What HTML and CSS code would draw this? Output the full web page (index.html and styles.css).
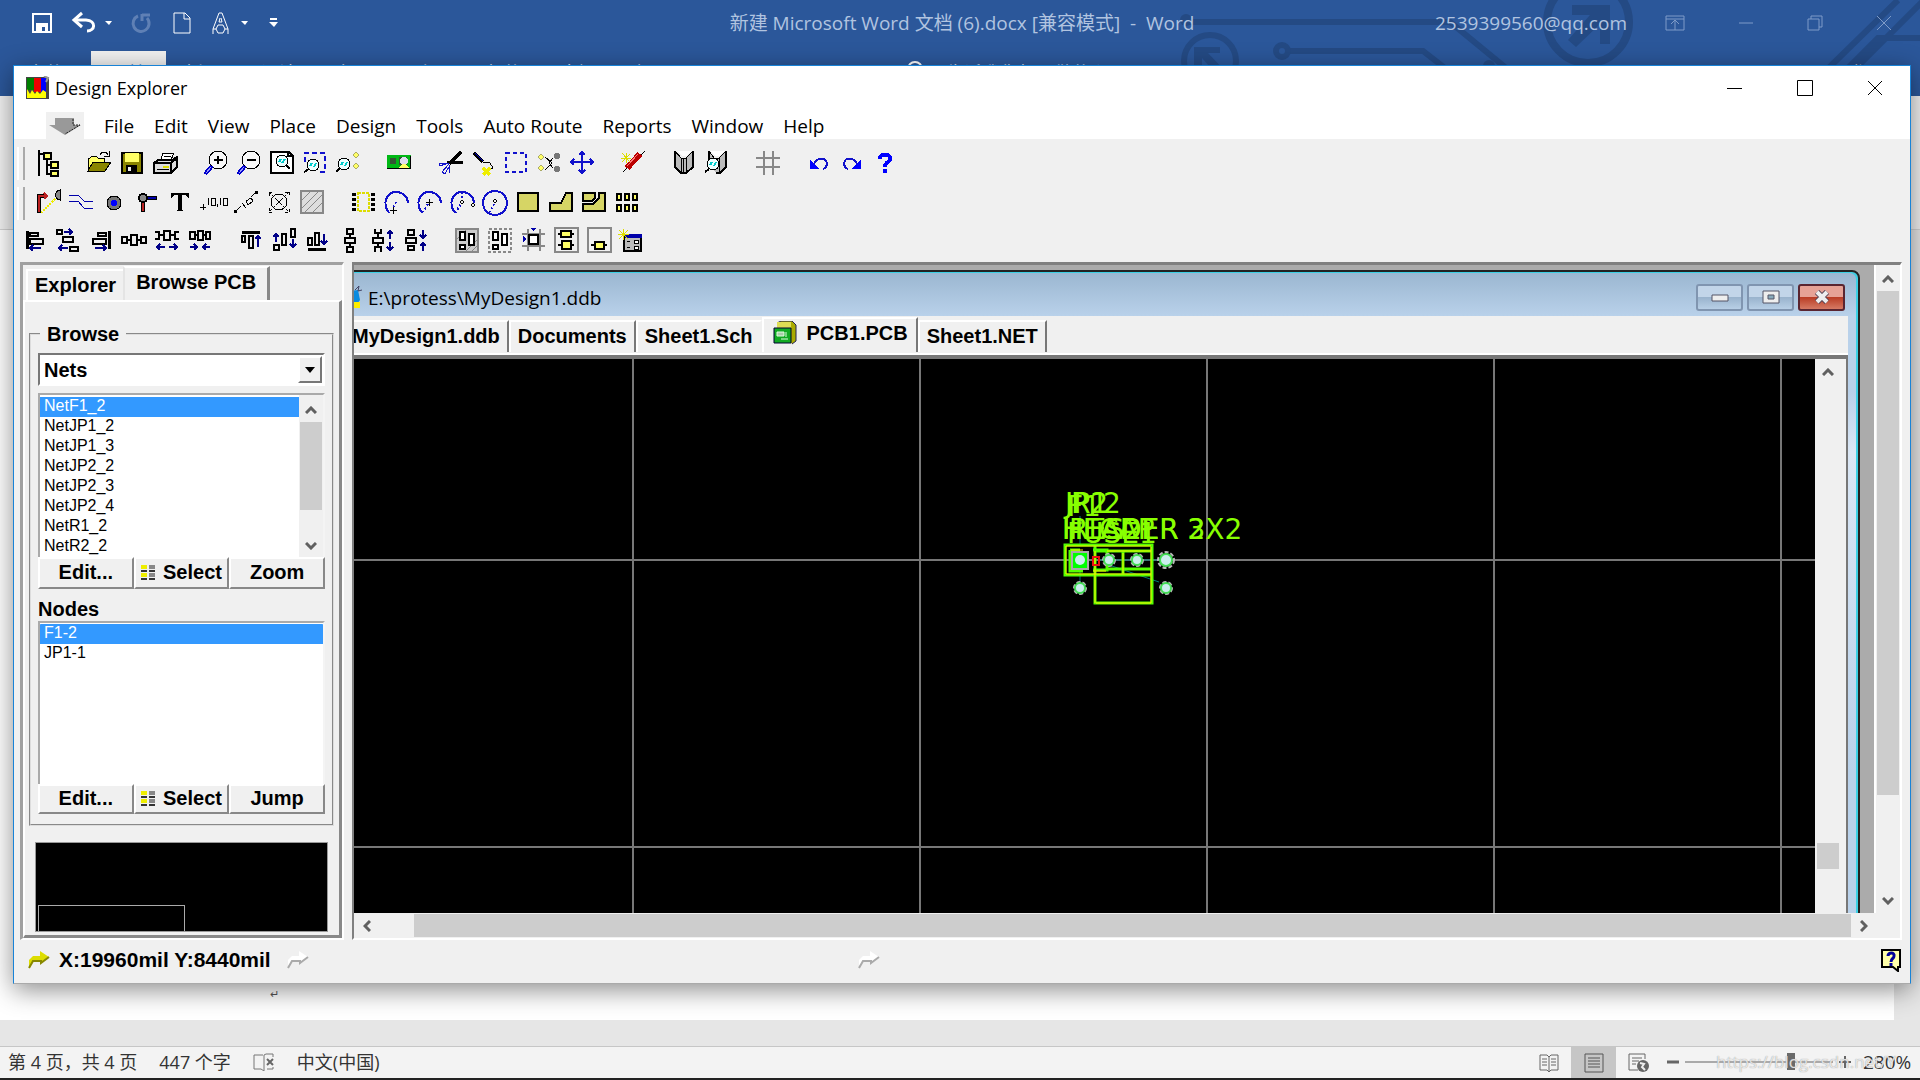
FILE: index.html
```html
<!DOCTYPE html>
<html lang="zh-CN">
<head>
<meta charset="utf-8">
<title>Design Explorer</title>
<link rel="stylesheet" href="styles.css">
</head>
<body>
<div class="desktop">
  <header class="word-head">
    <svg class="circuit" viewBox="0 0 760 96" width="760" height="96" aria-hidden="true">
      <g fill="none" stroke="#244a84" stroke-width="6">
        <path d="M26 22H290L380 96M126 51H263L290 72M660 96L718 38H880M640 96L738 0M668 96L764 0"/>
        <circle cx="50" cy="61" r="26"/><circle cx="122" cy="51" r="6"/><circle cx="428" cy="22" r="41" stroke-width="8"/>
      </g>
      <path d="M34 47H60V53H48L66 72L58 76L42 58V68H34ZM412 5H450V44H440V24L416 47L408 40L430 15H412Z" fill="#244a84"/>
      <circle cx="26" cy="20" r="6" fill="#244a84"/><circle cx="329" cy="66" r="6" fill="#244a84"/>
    </svg>
    <div class="word-title">
      <div class="quick">
        <button aria-label="保存"><svg width="20" height="20"><path d="M1 1H19V19H1ZM4 11H16" fill="none" stroke="#fff" stroke-width="2"/><path d="M4 12H16V19H13V14H10V19H4Z" fill="#fff"/></svg></button>
        <button aria-label="撤消"><svg width="36" height="20"><path d="M2 7H13C24 8 22 18 14 18" fill="none" stroke="#fff" stroke-width="3"/><path d="M9 0L1 7L9 14" fill="none" stroke="#fff" stroke-width="3"/><path d="M32 8H39L36 12Z" fill="#fff"/></svg></button>
        <button aria-label="重复"><svg width="22" height="20"><path d="M8 3A8 8 0 1 0 17 5M12 1V8M12 2H20" fill="none" stroke="#5f80b5" stroke-width="3"/></svg></button>
        <button aria-label="新建"><svg width="18" height="22"><path d="M1 1H12L17 6V21H1ZM11 1V7H17" fill="none" stroke="#fff"/></svg></button>
        <button aria-label="文本效果"><svg width="36" height="24"><path d="M1 23V18L7 2H10L16 18V23M8 7L7 11H10L9 7M6 14H11L13 18L11 22H6L4 18ZM1 18H4M13 18H16" fill="none" stroke="#fff"/><path d="M29 10H36L33 14Z" fill="#fff"/></svg></button>
        <button aria-label="自定义"><svg width="9" height="10"><path d="M1 1H8" stroke="#fff" stroke-width="2"/><path d="M0 4H9L5 9Z" fill="#fff"/></svg></button>
      </div>
      <div class="doc-name">新建 Microsoft Word 文档 (6).docx [兼容模式] &nbsp;- &nbsp;Word</div>
      <div class="account">
        <span>2539399560@qq.com</span>
        <button aria-label="功能区显示选项"><svg width="20" height="16"><path d="M1 1H19V15H1ZM1 4H19M10 15V6M6 9L10 5L14 9" fill="none" stroke="#7f9bc8"/></svg></button>
        <button aria-label="最小化"><svg width="16" height="16"><path d="M1 8H15" stroke="#7f9bc8"/></svg></button>
        <button aria-label="还原"><svg width="16" height="16"><path d="M1 4H12V15H1ZM4 4V1H15V12H12" fill="none" stroke="#7f9bc8"/></svg></button>
        <button aria-label="关闭"><svg width="16" height="16"><path d="M1 1L15 15M15 1L1 15" stroke="#7f9bc8"/></svg></button>
      </div>
    </div>
    <nav class="word-tabs">
      <button class="file">文件</button><button class="on">开始</button><button>插入</button><button>设计</button><button>布局</button><button>引用</button><button>邮件</button><button>审阅</button><button>视图</button>
      <svg class="bulb" width="20" height="30"><circle cx="10" cy="9" r="7" fill="none" stroke="#fff" stroke-width="2"/></svg>
      <button class="tell">告诉我您想要做什么</button>
      <button class="share">登录</button>
    </nav>
  </header>
  <main class="word-body">
    <div class="ribbon"></div>
    <div class="sheet"><span class="pilcrow">↵</span></div>
  </main>
  <footer class="word-foot">
    <span>第 4 页，共 4 页</span><span>447 个字</span>
    <svg width="22" height="18"><path d="M10 2H1V16H8L11 18V2L13 1H20V4M20 14V16H14" fill="none" stroke="#777"/><path d="M14 6L20 12M20 6L14 12" stroke="#666" stroke-width="2"/></svg>
    <span>中文(中国)</span>
    <div class="views">
      <button aria-label="阅读视图"><svg width="20" height="20"><path d="M1 2H8L10 4L12 2H19V17H12L10 19L8 17H1ZM10 4V18M3 6H8M3 9H8M3 12H8M12 6H17M12 9H17M12 12H17" fill="none" stroke="#666"/></svg></button>
      <button class="on" aria-label="页面视图"><svg width="20" height="20"><path d="M1 1H19V19H1ZM4 5H16M4 8H16M4 11H16M4 14H16" fill="none" stroke="#555"/></svg></button>
      <button aria-label="Web 版式"><svg width="22" height="20"><path d="M10 17H1V1H17V6M4 5H14M4 8H11M4 11H8" fill="none" stroke="#666"/><circle cx="15" cy="13" r="6" fill="#666"/><path d="M12 10L16 11L14 14L17 17" fill="none" stroke="#eee" stroke-width="2"/></svg></button>
    </div>
    <button class="step" aria-label="缩小"><svg width="12" height="12"><path d="M0 6H12" stroke="#666" stroke-width="3"/></svg></button>
    <input class="zoom" type="range" min="0" max="100" value="73" aria-label="显示比例">
    <button class="step" aria-label="放大"><svg width="12" height="12"><path d="M0 6H12M6 0V12" stroke="#666" stroke-width="2"/></svg></button>
    <span class="pct">280%</span>
    <span class="mark">https://blog.csdn.net/Y</span>
  </footer>
  <div class="taskbar"></div>

  <section class="window">
    <div class="title">
      <svg width="24" height="24" viewBox="0 0 24 24"><path d="M0 1H23V23H0Z" fill="#444"/><path d="M1 2H8V14H1Z" fill="#008000"/><path d="M8 2H15V16H8Z" fill="#e00"/><path d="M15 2H20V16H15Z" fill="#00f"/><path d="M1 22V13L4 18L6 14L9 18L11 15L14 18L17 14L20 16V22Z" fill="#ff0"/><path d="M18 0L22 2L20 6" fill="none" stroke="#999" stroke-width="2"/></svg>
      <span>Design Explorer</span>
      <button aria-label="Minimize"><svg width="16" height="16"><path d="M0 8.500H15" stroke="#000"/></svg></button>
      <button aria-label="Maximize"><svg width="16" height="16"><path d="M.5 .5H15.500V15.500H.5Z" fill="none" stroke="#000"/></svg></button>
      <button aria-label="Close"><svg width="16" height="16"><path d="M1 1L15 15M15 1L1 15" stroke="#000"/></svg></button>
    </div>
    <nav class="menu">
      <button class="sys" aria-label="System menu"><svg width="32" height="18"><path d="M6 1H25V8H32L16 18L0 8H6Z" fill="#999"/><path d="M24 2V8H31L16 17" fill="none" stroke="#222" stroke-dasharray="2 1"/></svg></button>
      <button>File</button><button>Edit</button><button>View</button><button>Place</button><button>Design</button><button>Tools</button><button>Auto Route</button><button>Reports</button><button>Window</button><button>Help</button>
    </nav>
    <div class="bars">
      <div class="bar grip">
        <div class="grp">
          <button aria-label="Panel"><svg viewBox="0 0 26 26"><path class="k n" d="M4 0V26M4 4H9M12 9V24H17M12 15H17"/><path class="y k" d="M9 3H16V9H9ZM16 12H23V18H16ZM16 21H23V26H16Z"/></svg></button>
        </div>
        <div class="grp">
          <button aria-label="Open"><svg viewBox="0 0 26 26"><path class="y o" d="M2 20V8H4L6 6H10L12 8H18V12"/><path d="M2 21L7 12H25L19 21Z" fill="#8a8500" class="o"/><path class="o n" d="M14 5C16 1 20 1 22 5M23 1V6H18"/></svg></button>
          <button aria-label="Save"><svg viewBox="0 0 26 26"><path class="k" d="M3 3H23V23H3Z" fill="#8a8500"/><path class="y" d="M6 3H20V12H6Z"/><path d="M7 15H18V22H7Z" fill="#000"/><path d="M9 17H12V21H9Z" fill="#eee"/></svg></button>
          <button aria-label="Print"><svg viewBox="0 0 26 26"><path class="o" d="M8 12L11 3H22L18 12" fill="#fff"/><path class="k" d="M2 13L6 10H20L25 7V17L19 23H2ZM2 13H19V23M19 13L25 8" fill="#ddd"/><path class="o" d="M12 6H19M11 9H18M5 19H17"/><path d="M11 16H17V18H11Z" fill="#dd0"/></svg></button>
        </div>
        <div class="grp">
          <button aria-label="Zoom in"><svg viewBox="0 0 26 26"><circle class="o" cx="15" cy="10" r="9" fill="#f8f8f8"/><path class="k" d="M11 10H20M15 6V14"/><path d="M9 16L2 24" stroke="#00c" stroke-width="4"/><path d="M8 17L3 23" stroke="#99f"/></svg></button>
          <button aria-label="Zoom out"><svg viewBox="0 0 26 26"><circle class="o" cx="15" cy="10" r="9" fill="#f8f8f8"/><path class="k" d="M11 10H20"/><path d="M9 16L2 24" stroke="#00c" stroke-width="4"/><path d="M8 17L3 23" stroke="#99f"/></svg></button>
          <button aria-label="Fit document"><svg viewBox="0 0 26 26"><path class="k" d="M2 2H20L24 6V23H2ZM19 2V6H24" fill="#fff"/><circle class="o" cx="13" cy="11" r="6" fill="#eff"/><path class="k" d="M17 15L21 19"/><path class="c" d="M10 12L12 9M13 13L16 9"/></svg></button>
          <button aria-label="Zoom area"><svg viewBox="0 0 26 26"><path class="b" d="M3 12V3H23V22H16" stroke-dasharray="5 3"/><circle class="o" cx="11" cy="15" r="6" fill="#eff"/><path class="k" d="M7 19L2 22"/><path class="c" d="M8 16L10 13M12 17L14 13"/></svg></button>
          <button aria-label="Zoom selected"><svg viewBox="0 0 26 26"><circle class="o" cx="9" cy="14" r="6" fill="#eff"/><path class="k" d="M5 18L1 22"/><path class="c" d="M6 15L8 12M10 16L12 12"/><path class="y g" d="M21 2L24 5L21 8L18 5ZM21 13L24 16L21 19L18 16Z"/></svg></button>
        </div>
        <div class="grp"><button aria-label="Board 3D"><svg viewBox="0 0 26 26"><path d="M1 5H25V18H1Z" fill="#00b815"/><path d="M4 8H10V14H4ZM13 7H21V15H13Z" fill="#353"/><circle cx="18" cy="11" r="4" fill="#dde"/><path class="y" d="M13 18L16 14H20L23 18Z"/><path class="o n" d="M1 18H24V6"/></svg></button></div>
        <div class="grp">
          <button aria-label="Cut"><svg viewBox="0 0 26 26"><path d="M24 2L12 14M26 12H14L10 13" fill="none" stroke="#000" stroke-width="3"/><path d="M12 13L2 13V16L9 14ZM12 14L5 22L8 24L13 15M12 15L12 23" fill="none" stroke="#11c"/></svg></button>
          <button aria-label="Paste"><svg viewBox="0 0 26 26"><path d="M4 3L13 12" stroke="#000" stroke-width="3"/><path d="M5 3L13 11" stroke="#00c"/><path class="o n" d="M13 12L20 13L23 18L18 20"/><path d="M13 18L20 25M20 18L13 25" stroke="#ee0" stroke-width="3"/></svg></button>
          <button aria-label="Select"><svg viewBox="0 0 26 26"><path class="b" d="M3 3H23V22H3Z" stroke-dasharray="4 3"/></svg></button>
          <button aria-label="Deselect"><svg viewBox="0 0 26 26"><path class="y g" d="M5 4L8 7L5 10L2 7ZM5 15L8 18L5 21L2 18Z"/><path class="o n" d="M9 7L16 13L9 20M17 8L13 13L17 18"/><circle cx="21" cy="6" r="3" fill="#777"/><circle cx="21" cy="19" r="3" fill="#777"/></svg></button>
          <button aria-label="Move"><svg viewBox="0 0 26 26"><path class="b" d="M3 12H23M13 3V22M10 5L13 2L16 5M10 20L13 23L16 20M5 9L2 12L5 15M21 9L24 12L21 15"/></svg></button>
        </div>
        <div class="grp"><button aria-label="Wizard"><svg viewBox="0 0 26 26"><path class="o" d="M3 22L25 1"/><path d="M7 18L20 4" stroke="#b00" stroke-width="6"/><path d="M7 16L18 4" stroke="#f77" stroke-width="1"/><path d="M1 8H11M6 3V13M2 3L10 12M10 4L2 12" stroke="#dd0"/></svg></button></div>
        <div class="grp">
          <button aria-label="Library"><svg viewBox="0 0 26 26"><path d="M4 1V17L10 23H15L22 17V1L15 8H10Z" fill="#bbb"/><path d="M6 1H20L15 6H11Z" fill="#fff"/><path class="k n" d="M4 1V17L10 23H15L22 17V1"/><path class="o n" d="M4 1L10 8H15L22 1M10 8V23M15 8V23M12 8V23"/></svg></button>
          <button aria-label="Browse library"><svg viewBox="0 0 26 26"><path d="M5 1V12L12 23H16L22 17V1L15 8H10Z" fill="#bbb"/><path d="M7 1H20L15 6H11Z" fill="#fff"/><path class="k n" d="M5 1V9M12 23H16L22 17V1"/><path class="o n" d="M5 1L10 8H15L22 1M15 8V23"/><circle class="o" cx="9" cy="14" r="6" fill="#eff"/><path class="k" d="M5 19L1 22"/><path class="c" d="M6 15L8 12M10 16L12 12"/></svg></button>
        </div>
        <div class="grp"><button aria-label="Grid"><svg viewBox="0 0 26 26"><path d="M9 1V25M18 1V25M1 8H25M1 17H25" stroke="#888" stroke-width="2"/></svg></button></div>
        <div class="grp">
          <button aria-label="Undo"><svg viewBox="0 0 26 26"><path d="M4 9V19H13Z" fill="#00f"/><path class="b" d="M8 14C11 8 19 6 21 13C21 16 20 18 17 19"/></svg></button>
          <button aria-label="Redo"><svg viewBox="0 0 26 26"><path d="M22 9V19H13Z" fill="#00f"/><path class="b" d="M18 14C15 8 7 6 5 13C5 16 6 18 9 19"/></svg></button>
          <button aria-label="Help"><svg viewBox="0 0 26 26"><path d="M8 9C7 3 19 3 18 9C18 12 13 12 13 17" fill="none" stroke="#00f" stroke-width="4"/><path d="M11 19H15V23H11Z" fill="#00f"/></svg></button>
        </div>
      </div>
      <div class="bar grip">
        <div class="grp">
          <button aria-label="Track"><svg viewBox="0 0 26 26"><path d="M4 23V6H9" fill="none" stroke="#000" stroke-width="4"/><path d="M4 22V6H12M9 3L12 6L9 9" fill="none" stroke="#b22" stroke-width="2"/><path d="M6 23L20 9" stroke="#ee0" stroke-width="2" stroke-dasharray="2 1"/><path class="o" d="M25 0C19 1 19 9 25 10Z" fill="#888"/></svg></button>
          <button aria-label="Interactive line"><svg viewBox="0 0 26 26"><path d="M1 5H10L16 11H25M1 11H10L16 18H25" fill="none" stroke="#00a" stroke-width="1"/></svg></button>
          <button aria-label="Pad"><svg viewBox="0 0 26 26"><circle class="o" cx="13" cy="13" r="7" fill="#777"/><circle cx="13" cy="13" r="3" fill="#00f"/></svg></button>
          <button aria-label="Via"><svg viewBox="0 0 26 26"><path d="M9 12V22M12 8H23" stroke="#000" stroke-width="4"/><path d="M9 12V21" stroke="#b22" stroke-width="2"/><path d="M12 8H22" stroke="#00a" stroke-width="2"/><circle class="k" cx="9" cy="8" r="4" fill="#888"/></svg></button>
          <button aria-label="String"><svg viewBox="0 0 26 26"><path d="M4 3H22V8H21L19 5H15V20L17 21H9L11 20V5H7L5 8H4Z"/></svg></button>
          <button aria-label="Coordinate"><svg viewBox="0 0 26 26"><path class="o n" d="M0 17H6M3 14V20M8 8V15M11 8H15V15H11ZM20 8V15M23 8H27V15H23ZM17 14V17"/></svg></button>
          <button aria-label="Dimension"><svg viewBox="0 0 26 26"><path class="o" d="M2 22L8 16M18 7L23 2"/><path d="M1 20H4V23H1ZM22 1H25V4H22Z"/><path class="o n" d="M9 13L13 18M13 11L18 8L20 11L15 15Z"/></svg></button>
          <button aria-label="Origin"><svg viewBox="0 0 26 26"><circle class="o n" cx="13" cy="12" r="8"/><path class="o n" d="M3 2L23 22M23 2L3 22M3 6V2H7M19 2H23V6M3 18V22H7M19 22H23V18" stroke-dasharray="3 1"/></svg></button>
          <button aria-label="Room"><svg viewBox="0 0 26 26"><path d="M2 1H24V23H2Z" fill="#ddd" stroke="#888" stroke-width="2"/><path d="M3 10L11 2M3 18L19 2M6 22L23 5M14 22L23 13" stroke="#888"/></svg></button>
        </div>
        <div class="grp">
          <button aria-label="Component"><svg viewBox="0 0 26 26"><path d="M8 3H19V21H8Z" fill="none" stroke="#dd0" stroke-width="2" stroke-dasharray="3 1"/><path d="M4 3V22M23 3V22" stroke="#000" stroke-width="4" stroke-dasharray="3 2"/></svg></button>
          <button aria-label="Arc edge"><svg viewBox="0 0 26 26"><path class="b" d="M6 23C-2 12 5 2 13 2C20 2 25 7 25 13"/><path class="b" d="M13 12L10 18" stroke-dasharray="2 2"/><path class="o" d="M10 17V24M7 20H14"/></svg></button>
          <button aria-label="Arc centre"><svg viewBox="0 0 26 26"><path class="b" d="M6 23C-2 12 5 2 13 2C20 2 25 7 25 13"/><path class="b" d="M12 14L7 22" stroke-dasharray="2 2"/><path class="o" d="M13 9V16M10 12H17"/></svg></button>
          <button aria-label="Arc angle"><svg viewBox="0 0 26 26"><path class="b" d="M6 23C-2 12 5 2 13 2C20 2 25 7 25 13"/><path class="b" d="M13 2V11M6 23L12 14" stroke-dasharray="2 2"/><path class="o n" d="M13 10L15 12L13 14L11 12ZM24 13L26 15L24 17L22 15Z"/></svg></button>
          <button aria-label="Circle"><svg viewBox="0 0 26 26"><circle class="b" cx="13" cy="13" r="12"/><path class="b" d="M12 14L8 22" stroke-dasharray="2 2"/><path class="o n" d="M13 9L15 11L13 13L11 11Z"/></svg></button>
          <button aria-label="Fill"><svg viewBox="0 0 26 26"><path class="k m" d="M3 3H23V21H3Z"/></svg></button>
          <button aria-label="Polygon"><svg viewBox="0 0 26 26"><path class="k m" d="M2 13H13L18 3H24V21H2Z"/></svg></button>
          <button aria-label="Split plane"><svg viewBox="0 0 26 26"><path class="k m" d="M2 3H14V8L11 11H2ZM2 14H12L18 8V3H24V21H2Z"/></svg></button>
          <button aria-label="Paste array"><svg viewBox="0 0 26 26"><path class="k" d="M2 7H8M10 7H16M18 7H24M2 18H8M10 18H16M18 18H24"/><path class="y k" d="M3 4H7V10H3ZM11 4H15V10H11ZM19 4H23V10H19ZM3 15H7V21H3ZM11 15H15V21H11ZM19 15H23V21H19Z"/></svg></button>
        </div>
      </div>
      <div class="bar short">
        <div class="grp">
          <button aria-label="Align left"><svg viewBox="0 0 26 26"><path d="M5 3V21" stroke="#000" stroke-width="3"/><path class="k n" d="M8 5H16V8H8ZM8 11H21V16H8Z"/><path class="d" d="M9 20H19M11 17L8 20L11 23"/></svg></button>
          <button aria-label="Align centre"><svg viewBox="0 0 26 26"><path class="k n" d="M2 2H7V6H2ZM8 9H18V14H8ZM15 19H23V23H15Z"/><path class="d" d="M9 4H17M14 1L17 4L14 7M4 20H13M7 17L4 20L7 23"/></svg></button>
          <button aria-label="Align right"><svg viewBox="0 0 26 26"><path d="M21 3V21" stroke="#000" stroke-width="3"/><path class="k n" d="M10 5H18V8H10ZM5 11H18V16H5Z"/><path class="d" d="M7 20H17M15 17L18 20L15 23"/></svg></button>
          <button aria-label="Space horizontally"><svg viewBox="0 0 26 26"><path class="k n" d="M1 9H6V15H1ZM10 7H16V17H10ZM20 9H25V15H20ZM6 12H10M16 12H20"/></svg></button>
          <button aria-label="Increase horizontal"><svg viewBox="0 0 26 26"><path class="k n" d="M1 4H5V11H1M25 4H21V11H25M10 3H16V12H10ZM5 7H10M16 7H21"/><path class="d" d="M3 19H11M6 16L3 19L6 22M15 19H23M20 16L23 19L20 22"/></svg></button>
          <button aria-label="Decrease horizontal"><svg viewBox="0 0 26 26"><path class="k n" d="M3 4H8V11H3ZM11 3H16V12H11ZM19 4H23V11H19ZM8 7H11M16 7H19"/><path class="d" d="M3 19H10M7 16L10 19L7 22M16 19H23M19 16L16 19L19 22"/></svg></button>
        </div>
        <div class="grp">
          <button aria-label="Align top"><svg viewBox="0 0 26 26"><path d="M4 4H22" stroke="#000" stroke-width="3"/><path class="k n" d="M4 8H7V14H4ZM11 8H15V20H11Z"/><path class="d" d="M20 19V9M17 11L20 8L23 11"/></svg></button>
          <button aria-label="Align middle"><svg viewBox="0 0 26 26"><path class="k n" d="M3 17H8V22H3ZM11 6H15V17H11ZM20 1H24V9H20Z"/><path class="d" d="M5 14V6M2 9L5 6L8 9M22 11V19M19 16L22 19L25 16"/></svg></button>
          <button aria-label="Align bottom"><svg viewBox="0 0 26 26"><path d="M4 21H22" stroke="#000" stroke-width="3"/><path class="k n" d="M4 10H8V17H4ZM11 5H15V17H11Z"/><path class="d" d="M20 6V16M17 13L20 16L23 13"/></svg></button>
          <button aria-label="Space vertically"><svg viewBox="0 0 26 26"><path class="k n" d="M10 1H16V6H10ZM8 10H18V15H8ZM10 19H16V24H10ZM13 6V10M13 15V19"/></svg></button>
          <button aria-label="Increase vertical"><svg viewBox="0 0 26 26"><path class="k n" d="M5 1V5H11V1M3 10H13V15H3ZM5 24V19H11V24M8 5V10M8 15V19"/><path class="d" d="M20 11V3M17 6L20 3L23 6M20 14V22M17 19L20 22L23 19"/></svg></button>
          <button aria-label="Decrease vertical"><svg viewBox="0 0 26 26"><path class="k n" d="M5 2H11V7H5ZM3 10H13V15H3ZM5 18H11V22H5Z"/><path class="d" d="M20 2V10M17 7L20 10L23 7M20 23V15M17 18L20 15L23 18"/></svg></button>
        </div>
        <div class="grp">
          <button aria-label="Arrange in room"><svg viewBox="0 0 26 26"><path d="M2 1H24V24H2Z" fill="#ccc" stroke="#888" stroke-width="2"/><path d="M2 12L12 2M12 23L23 12M18 23L23 18" stroke="#888"/><path class="k" d="M6 4H11V12H6ZM15 6H20V17H15ZM6 17H11V21H6Z" fill="#fff"/></svg></button>
          <button aria-label="Arrange in rectangle"><svg viewBox="0 0 26 26"><path d="M2 1H24V24H2Z" fill="none" stroke="#888" stroke-width="2" stroke-dasharray="3 2"/><path class="k" d="M6 4H11V12H6ZM15 6H20V17H15ZM6 17H11V21H6Z" fill="#fff"/></svg></button>
          <button aria-label="Move to grid"><svg viewBox="0 0 26 26"><path d="M8 1V23M20 1V23M2 6H25M2 18H25" stroke="#888" stroke-width="2"/><path class="k" d="M9 7H18V16H9Z" fill="#fff"/><path d="M10 0H16L13 3ZM3 8V14L6 11Z" fill="#00a"/></svg></button>
          <button aria-label="Create union"><svg viewBox="0 0 26 26"><path d="M2 0H25V24H2Z" fill="none" stroke="#888" stroke-width="2"/><path class="k" d="M5 6H21M5 17H21"/><path class="k y" d="M8 3H18V9H8ZM9 13H18V21H9Z"/></svg></button>
          <button aria-label="Break union"><svg viewBox="0 0 26 26"><path d="M2 0H25V24H2Z" fill="none" stroke="#888" stroke-width="2"/><path class="k" d="M5 17H21"/><path class="k y" d="M9 14H18V21H9Z"/></svg></button>
          <button aria-label="Placement"><svg viewBox="0 0 26 26"><path class="k" d="M5 7H22V23H5Z" fill="#bbb"/><path d="M6 6H23V10H6Z" fill="#00a"/><path class="o n" d="M8 13H11M8 19H11"/><path class="o" fill="#fff" d="M15 12H19V15H15ZM15 18H19V21H15Z"/><path d="M-1 6H10M4 1V12M0 2L9 11M9 2L0 11" stroke="#dd0"/></svg></button>
        </div>
      </div>
    </div>
    <div class="work">
      <aside class="panel">
        <div class="ptabs"><button>Explorer</button><button class="on">Browse PCB</button></div>
        <div class="page">
          <fieldset>
            <legend>Browse</legend>
            <div class="combo"><select aria-label="Browse"><option>Nets</option></select><span class="drop"></span></div>
            <div class="listbox nets">
              <select size="8" aria-label="Nets"><option selected>NetF1_2</option><option>NetJP1_2</option><option>NetJP1_3</option><option>NetJP2_2</option><option>NetJP2_3</option><option>NetJP2_4</option><option>NetR1_2</option><option>NetR2_2</option></select>
              <div class="vs"><svg class="arw" viewBox="0 0 12 8"><path d="M1 7L6 2L11 7"/></svg><i class="thumb"></i><svg class="arw" viewBox="0 0 12 8"><path d="M1 1L6 6L11 1"/></svg></div>
            </div>
            <div class="btns"><button>Edit...</button><button><svg width="14" height="15"><path d="M0 0H6V4H0ZM0 8H6V12H0Z" fill="#ee0"/><path d="M8 0H14V4H8ZM8 8H14V12H8Z" fill="#888"/><path d="M0 5H6V7H0ZM8 5H14V7H8ZM0 13H6V15H0ZM8 13H14V15H8Z" fill="#333"/></svg>Select</button><button>Zoom</button></div>
            <label for="nodes">Nodes</label>
            <div class="listbox nodes"><select id="nodes" size="8"><option selected>F1-2</option><option>JP1-1</option></select></div>
            <div class="btns"><button>Edit...</button><button><svg width="14" height="15"><path d="M0 0H6V4H0ZM0 8H6V12H0Z" fill="#ee0"/><path d="M8 0H14V4H8ZM8 8H14V12H8Z" fill="#888"/><path d="M0 5H6V7H0ZM8 5H14V7H8ZM0 13H6V15H0ZM8 13H14V15H8Z" fill="#333"/></svg>Select</button><button>Jump</button></div>
          </fieldset>
          <div class="preview"><div class="extent"></div></div>
        </div>
      </aside>
      <div class="mdi">
        <div class="client">
          <section class="child">
            <div class="ctitle">
              <svg width="20" height="24"><path d="M2 6L16 4L18 14L12 22H4Z" fill="#0a8be0"/><path d="M12 16H18V22H12Z" fill="#fe0"/><path d="M13 4L17 0L16 5L20 4" fill="none" stroke="#446"/></svg>
              <span>E:\protess\MyDesign1.ddb</span>
              <button aria-label="Minimize"><svg width="18" height="14"><path d="M1 5H17V11H1Z" fill="#eee" stroke="#556"/></svg></button>
              <button aria-label="Maximize"><svg width="18" height="14"><path d="M1 1H17V13H1Z" fill="#eee" stroke="#556"/><path d="M6 5H12V9H6Z" fill="#8ab" stroke="#556"/></svg></button>
              <button class="close" aria-label="Close"><svg width="18" height="14"><path d="M4 2L14 12M14 2L4 12" stroke="#545" stroke-width="6"/><path d="M4 2L14 12M14 2L4 12" stroke="#eee" stroke-width="4"/></svg></button>
            </div>
            <div class="cbody">
              <div class="dtabs"><button>MyDesign1.ddb</button><button>Documents</button><button>Sheet1.Sch</button><button class="on"><svg width="26" height="24"><path d="M5 2L9 0H20L24 4V20L20 23" fill="#aa0" stroke="#225"/><path d="M5 1H19V8H5Z" fill="#dd5"/><path d="M2 7H19V22H2Z" fill="#1a2" stroke="#003"/><path d="M5 11H12V15H5ZM9 18H16M14 11V16" fill="#aca" stroke="#dfd"/></svg>PCB1.PCB</button><button>Sheet1.NET</button></div>
              <div class="doc">
                <div class="canvas">
                  <svg class="parts" width="190" height="125" viewBox="0 0 190 125">
                    <path d="M21 31V60M21 80V98M40 75H107M50 80L100 97" stroke="#077" stroke-width="1"/>
                    <g class="vec">
                      <text x="6" y="28">JP2</text><text x="12" y="28">R1</text><text x="8" y="31">F1</text><text x="44" y="28">2</text>
                      <text x="3" y="54">HEADER 2X2</text><text x="3" y="54">HEADER 3</text><text x="8" y="58">FUSE1</text><text x="10" y="54">RES2</text><text x="40" y="54">CAP</text>
                    </g>
                    <g fill="none" stroke="#5f0" stroke-width="3">
                      <path d="M6 60H93V90H6ZM36 60V118H93V60M36 66H93M48 84H93M36 90H93M64 66V90M11 65H21M11 65V86H24M34 65H48V85H34"/>
                    </g>
                    <path d="M7 61V89H92M7 61H92M37 118H92V62M12 65H24M34 86H47M36 66V118M64 68V88M48 66H92" fill="none" stroke="#fe0"/>
                    <path d="M34 72H40V80H34Z" fill="none" stroke="#e11" stroke-width="2"/>
                    <path d="M13 67H29V84H13Z" fill="#0f0" stroke="#aaa" stroke-width="2"/>
                    <g fill="none" stroke="#bbb" stroke-width="2" stroke-dasharray="4 2"><circle cx="50" cy="75" r="6"/><circle cx="78" cy="75" r="6"/><circle cx="107" cy="75" r="8"/><circle cx="107" cy="103" r="6"/><circle cx="21" cy="103" r="6"/></g>
                    <g fill="#cee" stroke="#4d5" stroke-width="2"><circle cx="50" cy="75" r="5"/><circle cx="78" cy="75" r="5"/><circle cx="107" cy="75" r="6"/><circle cx="107" cy="103" r="5"/><circle cx="21" cy="103" r="5"/></g>
                    <circle cx="21" cy="75" r="5" fill="#cee"/>
                  </svg>
                </div>
                <div class="vs doc-vs"><svg class="arw" viewBox="0 0 12 8"><path d="M1 7L6 2L11 7"/></svg><i class="thumb"></i></div>
              </div>
            </div>
          </section>
        </div>
        <div class="vs mdi-vs"><svg class="arw" viewBox="0 0 12 8"><path d="M1 7L6 2L11 7"/></svg><i class="thumb"></i><svg class="arw" viewBox="0 0 12 8"><path d="M1 1L6 6L11 1"/></svg></div>
        <div class="hs"><svg class="arh" viewBox="0 0 8 12"><path d="M7 1L2 6L7 11"/></svg><i class="thumb"></i><svg class="arh" viewBox="0 0 8 12"><path d="M1 1L6 6L1 11"/></svg></div>
      </div>
    </div>
    <div class="status">
      <svg width="22" height="20"><path d="M1 18V10L5 6H12V1L21 7L13 13V10H6Z" fill="#dd0"/><path d="M1 18L5 11H13V13L21 7" fill="none" stroke="#880" stroke-width="2"/></svg>
      <span class="xy">X:19960mil Y:8440mil</span>
      <svg width="22" height="20"><path d="M1 18V10L5 6H12V1L21 7L13 13V10H6Z" fill="#fff"/><path d="M1 18L5 11H13V13L21 7" fill="none" stroke="#aaa" stroke-width="2"/></svg>
      <svg class="mid" width="22" height="20"><path d="M1 18V10L5 6H12V1L21 7L13 13V10H6Z" fill="#fff"/><path d="M1 18L5 11H13V13L21 7" fill="none" stroke="#aaa" stroke-width="2"/></svg>
      <button aria-label="Help advisor"><svg width="22" height="24"><path d="M2 2H20V19H18V23L13 19H2Z" fill="#ffa" stroke="#000" stroke-width="2"/><path d="M8 8C8 4 15 4 14 8C14 11 11 10 11 14M11 15V18" fill="none" stroke="#009" stroke-width="3"/></svg></button>
    </div>
  </section>
</div>
</body>
</html>
```
FILE: styles.css
```css
* { box-sizing: border-box; }
body { margin: 0; }
button { margin: 0; padding: 0; border: 0; background: none; color: inherit; font: inherit; display: flex; align-items: center; justify-content: center; white-space: nowrap; }
svg { flex: none; display: block; }

.desktop { position: relative; height: 100vh; display: flex; flex-direction: column; overflow: hidden; background: #e6e6e6; font: 18px/24px "Open Sans", "Noto Sans CJK SC", sans-serif; }

/* Word behind the design window */
.word-head { position: relative; flex: none; height: 96px; background: #2b579a; color: #fff; overflow: hidden; }
.circuit { position: absolute; top: 0; right: 0; }
.word-title { position: relative; height: 51px; display: grid; grid-template-columns: 1fr auto 1fr; align-items: center; padding: 0 28px 6px 32px; color: #b1c4e0; }
.quick { display: flex; align-items: center; gap: 21px; }
.quick svg { overflow: visible; }
.doc-name { font-size: 19px; }
.account { display: flex; justify-content: flex-end; align-items: center; gap: 53px; }
.account span { font-size: 19px; margin-right: -15px; }
.word-tabs { position: relative; display: flex; font-size: 18px; height: 45px; }
.word-tabs button { width: 75px; align-items: flex-start; padding-top: 10px; }
.word-tabs .file { width: 91px; }
.word-tabs .on { background: #f1f1f1; color: #2b579a; }
.word-tabs .bulb { margin: 9px 0 0 214px; }
.word-tabs .tell { width: 180px; margin-left: 12px; }
.word-tabs .share { margin-left: auto; margin-right: 18px; }
.word-body { flex: 1; padding-bottom: 26px; display: flex; flex-direction: column; }
.ribbon { height: 134px; flex: none; background: #f1f1f1; border-bottom: 1px solid #d2d2d2; }
.sheet { flex: 1; margin-right: 26px; background: #fff; display: flex; align-items: flex-end; padding: 0 0 14px 270px; }
.pilcrow { font-size: 11px; color: #555; }
.word-foot { position: relative; flex: none; height: 32px; background: #f3f3f3; border-top: 1px solid #c6c6c6; display: flex; align-items: center; gap: 22px; padding: 0 7px 2px 8px; color: #333; font-size: 18px; }
.views { display: flex; align-self: stretch; margin: 0 -6px -2px auto; }
.views button { width: 45px; }
.views .on { background: #c6c6c6; }
.step { margin: 0 -10px; }
.zoom { appearance: none; width: 148px; height: 18px; margin: 0 -6px; background: linear-gradient(#aaa, #aaa) center / 100% 2px no-repeat; }
.zoom::-webkit-slider-thumb { appearance: none; width: 8px; height: 17px; background: #6a6a6a; }
.pct { width: 50px; font-size: 19px; }
.mark { position: absolute; right: 14px; bottom: 4px; width: 190px; overflow: hidden; white-space: nowrap; color: rgba(255,255,255,.75); text-shadow: 0 0 1px #888; font-size: 17px; }
.taskbar { flex: none; height: 2px; background: #222; }

/* Design Explorer window */
.window { position: absolute; top: 65px; left: 13px; right: 9px; bottom: 96px; display: flex; flex-direction: column; background: #f0f0f0; border: 1px solid #1883d7; border-bottom-color: #aaa; box-shadow: 0 6px 24px rgba(0,0,0,.45); color: #000; }
.title { flex: none; height: 46px; display: flex; align-items: center; background: #fff; padding: 0 0 2px 12px; }
.title span { flex: 1; margin-left: 5px; }
.title button { width: 70px; height: 44px; }
.menu { flex: none; height: 27px; display: flex; align-items: center; gap: 20px; background: #fff; padding-left: 32px; font-size: 19px; }
.menu .sys { width: 38px; height: 27px; background: #f0f0f0; }
.bars { flex: none; padding: 4px 0 3px; }
.bar { height: 40px; display: flex; gap: 18px; padding-left: 17px; position: relative; }
.bar.short { height: 36px; padding-left: 4px; }
.bar.grip::before { content: ""; position: absolute; left: 3px; top: 4px; width: 4px; height: 33px; border-right: 2px solid #aaa; border-left: 2px solid #fff; }
.grp { display: flex; }
.grp button { width: 33px; }
.grp svg { width: 26px; height: 26px; shape-rendering: crispEdges; overflow: visible; }
.k { stroke: #000; stroke-width: 2; }
.o { stroke: #000; stroke-width: 1; }
.g { stroke: #aa6; }
.b { stroke: #11c; stroke-width: 2; fill: none; }
.d { stroke: #008; stroke-width: 2; fill: none; }
.c { stroke: #0cc; stroke-width: 2; }
.n { fill: none; }
.y { fill: #ff6; }
.m { fill: #d6d565; }

.work { flex: 1; min-height: 0; display: flex; gap: 8px; padding: 0 8px 0 6px; }
.panel { width: 324px; flex: none; display: flex; flex-direction: column; border: 3px solid #a0a0a0; border-right: 2px solid #fff; border-bottom: 2px solid #fff; font: bold 20px/24px "Liberation Sans", sans-serif; }
.ptabs { height: 35px; flex: none; display: flex; align-items: flex-end; padding-left: 3px; }
.ptabs button { height: 31px; padding: 0 7px 2px; border-left: 2px solid #fff; border-top: 2px solid #fff; }
.ptabs .on { height: 34px; padding: 0 11px 4px; border-right: 3px solid #888; border-left: 2px solid #e4e4e4; }
.page { flex: 1; min-height: 0; display: flex; flex-direction: column; border: 2px solid #fff; border-right: 3px solid #888; border-bottom: 3px solid #888; padding: 20px 5px 3px 4px; }
fieldset { margin: 0; min-width: 0; padding: 7px 7px 10px; border: 2px groove #ddd; }
legend { margin-left: 2px; padding: 0 7px; height: 24px; }
.combo { position: relative; height: 33px; margin-bottom: 7px; border: 2px solid #888; border-color: #777 #fff #fff #777; }
.combo select { width: 100%; height: 100%; appearance: none; border: 0; padding-left: 4px; background: #fff; color: #000; font: inherit; }
.drop { position: absolute; right: 1px; top: 1px; bottom: 1px; width: 24px; background: #f0f0f0; border: 2px solid #fff; border-color: #fff #777 #777 #fff; display: grid; place-items: center; pointer-events: none; }
.drop::before { content: ""; border: 5px solid transparent; border-top: 6px solid #000; border-bottom: 0; }
.listbox { display: flex; background: #fff; border: 2px solid #aaa; border-right-color: #f4f4f4; border-bottom: 0; }
.listbox select { flex: 1; min-width: 0; appearance: none; border: 0; outline: 0; padding: 1px 0 0; background: #fff; color: #000; overflow: hidden; font: 16px/20px "Liberation Sans", sans-serif; }
.listbox.nets select { padding-top: 2px; }
.listbox option { height: 20px; min-height: 20px; padding: 0 4px; line-height: 20px; color: #000; }
.listbox option:checked { background: linear-gradient(#39f, #39f); color: #fff; }
.nets { height: 164px; }
.nets .vs { padding: 11px 1px 7px; }
.nodes { height: 163px; }
.btns { display: grid; grid-template-columns: repeat(3, 1fr); height: 32px; }
.btns button { gap: 8px; padding-bottom: 2px; border: 2px solid #fff; border-color: #fff #888 #888 #fff; }
.nodes + .btns { height: 30px; }
fieldset label { display: block; padding: 8px 0 0; height: 32px; }
.preview { flex: 1; min-height: 40px; margin: 16px 6px 0; background: #000; border: 1px solid #999; display: flex; align-items: flex-end; padding-left: 2px; }
.extent { width: 51%; height: 30%; border: 1px solid #aaa; border-bottom: 0; }

.vs { width: 24px; flex: none; background: #f0f0f0; display: flex; flex-direction: column; align-items: center; padding: 9px 1px; }
.arw { width: 12px; height: 8px; }
.arh { width: 8px; height: 12px; }
.arw path, .arh path { fill: none; stroke: #606060; stroke-width: 3; }
.thumb { background: #cdcdcd; }
.nets .thumb { width: 22px; height: 88px; margin: 8px 0 auto; }

/* Document area */
.mdi { flex: 1; min-width: 0; display: grid; grid-template: minmax(0, 1fr) 25px / minmax(0, 1fr) 26px; border: 2px solid #808080; border-top-width: 3px; border-right-color: #fff; border-bottom-color: #fff; }
.client { position: relative; overflow: hidden; background: #ababab; }
.mdi-vs { width: 26px; padding: 10px 1px 8px; border-left: 2px solid #fff; }
.mdi-vs .thumb { width: 22px; height: 80%; margin: 8px 0 auto; }
.hs { grid-column: 1 / 3; display: flex; align-items: center; background: #f0f0f0; padding: 1px 32px 1px 9px; }
.hs .thumb { flex: 1; align-self: stretch; margin: 0 9px 0 43px; }
.child { position: absolute; top: 5px; left: -14px; right: 14px; bottom: -20px; display: flex; flex-direction: column; padding-right: 10px; border: 2px solid #222; border-radius: 0 8px 0 0; background: linear-gradient(#9ab6d0, #b9d1ea 44px, #b9d1ea 120px, #dbe7f5 180px, #b9d1ea 500px); box-shadow: inset -2px 1px 0 #3cd0e4; }
.ctitle { height: 44px; flex: none; display: flex; align-items: center; gap: 4px; padding: 8px 3px 0 0; }
.ctitle span { flex: 1; margin-left: 2px; font-size: 19px; }
.ctitle button { width: 47px; height: 27px; margin-top: -2px; border: 2px solid #8095b0; border-radius: 3px; background: linear-gradient(#c2d5e9 46%, #98b2cc 47%, #b8cfe6); }
.ctitle .close { border-color: #5a2530; background: linear-gradient(#e6a296 46%, #b83a22 47%, #d67a64); }
.cbody { flex: 1; min-height: 0; display: flex; flex-direction: column; background: #f0f0f0; }
.dtabs { height: 39px; flex: none; display: flex; align-items: flex-start; padding-top: 4px; border-bottom: 2px solid #fff; font: bold 20px/24px "Liberation Sans", sans-serif; }
.dtabs button { height: 32px; padding: 0 7px 2px; border-top: 2px solid #fff; border-left: 2px solid #fff; border-right: 2px solid #777; }
.dtabs button:first-child { padding: 0 7px 2px 8px; }
.dtabs button:nth-child(3) { border-right-color: #f0f0f0; }
.dtabs .on { height: 35px; margin-top: -3px; padding: 0 8px 6px; gap: 9px; }
.doc { flex: 1; min-height: 0; display: flex; border-top: 4px solid #777; border-right: 2px solid #777; padding-right: 6px; }
.canvas { position: relative; flex: 1; background: linear-gradient(90deg, #777 2px, transparent 2px) 290px 0 / 287px 100%, linear-gradient(#777 2px, transparent 2px) 0 200px / 100% 287px, #000; }
.parts { position: absolute; left: 717px; top: 126px; }
.vec { font: 28px "DejaVu Sans", sans-serif; fill: #8f0; }
.doc-vs { width: 25px; }
.doc-vs .thumb { width: 22px; height: 26px; margin-top: 467px; }

.status { flex: none; height: 43px; display: flex; align-items: center; gap: 9px; padding: 0 8px 4px 14px; font: bold 21px/24px "Liberation Sans", sans-serif; }
.xy { margin-right: 7px; }
.mid { margin-left: 540px; }
.status button { margin-left: auto; }
```
